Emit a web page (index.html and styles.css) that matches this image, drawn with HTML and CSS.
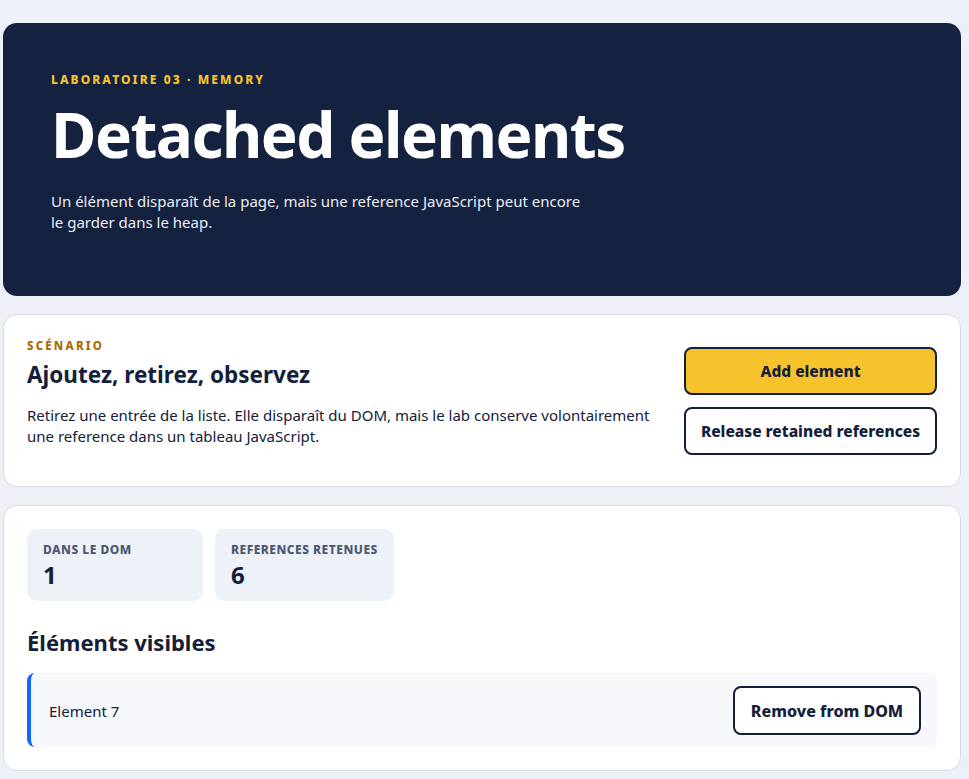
FILE: index.html
```html
<!DOCTYPE html>
<html lang="fr">
<head>
  <meta charset="UTF-8">
  <meta name="viewport" content="width=device-width, initial-scale=1.0">
  <title>Laboratoire 03 - Detached elements</title>
  <link rel="stylesheet" href="styles.css">
</head>
<body>
  <main class="page">
    <header class="hero">
      <p class="eyebrow">Laboratoire 03 · Memory</p>
      <h1>Detached elements</h1>
      <p class="hero-text">Un élément disparaît de la page, mais une reference JavaScript peut encore le garder dans le heap.</p>
    </header>

    <section class="card scenario">
      <div class="scenario-text">
        <p class="kicker">Scénario</p>
        <h2>Ajoutez, retirez, observez</h2>
        <p>Retirez une entrée de la liste. Elle disparaît du DOM, mais le lab conserve volontairement une reference dans un tableau JavaScript.</p>
      </div>
      <div class="actions">
        <button class="btn btn-primary" id="addButton">Add element</button>
        <button class="btn" id="releaseButton">Release retained references</button>
      </div>
    </section>

    <section class="card list-card">
      <div class="stats">
        <div class="stat">
          <span class="stat-label">Dans le DOM</span>
          <strong id="domCount">1</strong>
        </div>
        <div class="stat">
          <span class="stat-label">References retenues</span>
          <strong id="retainedCount">6</strong>
        </div>
      </div>

      <h2 class="list-title">Éléments visibles</h2>
      <ul class="items" id="itemList">
        <li class="item">
          <span>Element 7</span>
          <button class="btn btn-small">Remove from DOM</button>
        </li>
      </ul>
    </section>
  </main>
</body>
</html>
```

FILE: styles.css
```css
/* base */
body {
  margin: 0;
  background-color: #edf0f7;
  color: #14203a;
  font-family: 'Noto Sans', 'Open Sans', sans-serif;
}

.page {
  margin: 0 8px 0 3px;
  padding: 23px 0 8px;
  display: flex;
  flex-direction: column;
  gap: 18px;
}

/* bandeau */
.hero {
  background-color: #15223f;
  color: #ffffff;
  border-radius: 14px;
  padding: 48px 48px 63px;
}

.eyebrow {
  margin: 0;
  color: #f6c32c;
  font-size: 12px;
  line-height: 17px;
  font-weight: 800;
  letter-spacing: 2.1px;
  text-transform: uppercase;
}

.hero h1 {
  margin: 11px 0 22px;
  font-size: 62px;
  line-height: 70px;
  letter-spacing: -1.5px;
  font-weight: 700;
}

.hero-text {
  margin: 0;
  max-width: 535px;
  font-size: 15px;
  line-height: 21px;
  color: #e9edf5;
}

/* cartes */
.card {
  background-color: #ffffff;
  border: 1px solid #d5dbe7;
  border-radius: 14px;
}

.scenario {
  display: flex;
  align-items: flex-start;
  justify-content: space-between;
  gap: 30px;
  padding: 24px 23px 31px;
}

.kicker {
  margin: 0;
  color: #a86d00;
  font-size: 11.5px;
  line-height: 14px;
  font-weight: 800;
  letter-spacing: 2.2px;
  text-transform: uppercase;
}

.scenario h2 {
  margin: 8px 0 16px;
  font-size: 22.5px;
  line-height: 28px;
}

.scenario-text p:last-child {
  margin: 0;
  font-size: 15px;
  line-height: 21px;
  max-width: 630px;
}

.actions {
  display: flex;
  flex-direction: column;
  gap: 12px;
  width: 253px;
  flex-shrink: 0;
  margin-top: 8px;
}

.btn {
  background-color: #ffffff;
  color: #14203a;
  border: 2px solid #14203a;
  border-radius: 8px;
  font-family: inherit;
  font-size: 15.5px;
  font-weight: 800;
  height: 48px;
  padding: 0 12px;
  cursor: pointer;
}

.btn-primary {
  background-color: #f6c32c;
}

/* compteurs */
.list-card {
  padding: 23px;
}

.stats {
  display: flex;
  gap: 12px;
}

.stat {
  background-color: #edf1f8;
  border-radius: 10px;
  padding: 12px 16px 10px;
  min-width: 144px;
  display: flex;
  flex-direction: column;
}

.stat-label {
  color: #4b5873;
  font-size: 12px;
  line-height: 17px;
  font-weight: 800;
  letter-spacing: 0.5px;
  text-transform: uppercase;
}

.stat strong {
  margin-top: 1px;
  font-size: 24px;
  line-height: 32px;
}

.list-title {
  margin: 26px 0 16px;
  font-size: 22px;
  line-height: 30px;
}

/* liste */
.items {
  list-style: none;
  margin: 0;
  padding: 0;
}

.item {
  display: flex;
  align-items: center;
  justify-content: space-between;
  background-color: #f6f8fc;
  border-left: 4px solid #1565ff;
  border-radius: 8px;
  padding: 13px 16px 12px 18px;
  font-size: 15px;
}

.btn-small {
  height: 49px;
  width: 188px;
  font-size: 16px;
}
```
